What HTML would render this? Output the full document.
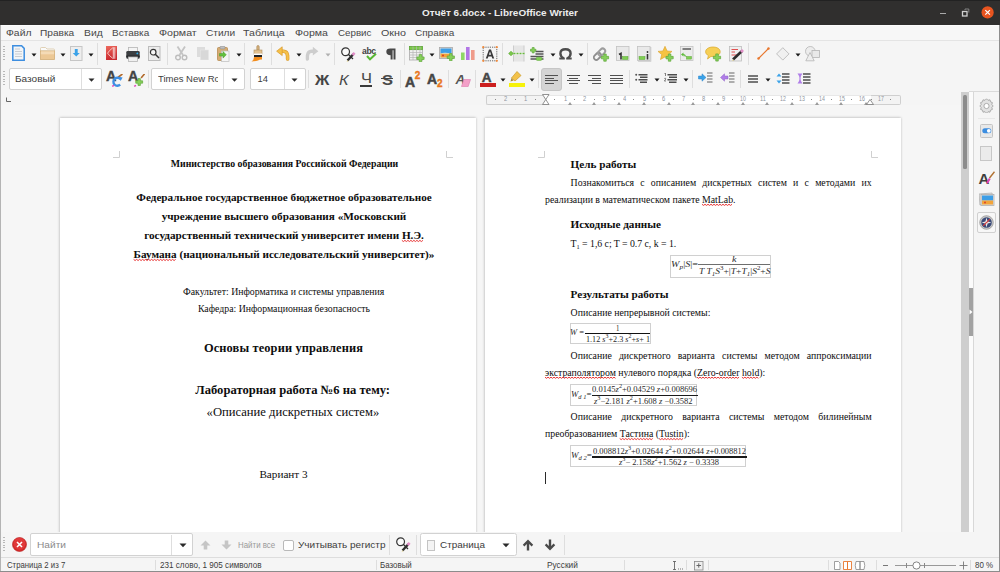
<!DOCTYPE html>
<html><head><meta charset="utf-8">
<style>
*{margin:0;padding:0;box-sizing:border-box}
html,body{width:1000px;height:572px;overflow:hidden;background:#f5f5f5;font-family:'Liberation Sans',sans-serif;position:relative}
.a{position:absolute}
.sp{}
</style></head><body>
<div class="a" style="left:0px;top:0px;width:1000px;height:25px;background:#302f2e"></div><div class="a" style="left:0px;top:0px;width:1000px;height:1px;background:#222"></div><div class="a" id="fit0" style="left:422.0px;top:8.40px;font:normal bold 9.8px/9.8px 'Liberation Sans',sans-serif;color:#ececec;white-space:nowrap;transform-origin:0 0;transform:scaleX(1.0170);">Отчёт 6.docx - LibreOffice Writer</div><div class="a" style="left:940px;top:13px;width:6px;height:1.4px;background:#a9a9a9"></div><svg class="a" style="left:960px;top:8px;" width="10" height="9" viewBox="0 0 10 9"><rect x="2.5" y="3.5" width="4.5" height="4.5" fill="none" stroke="#d0d0d0" stroke-width="1.3"/><path d="M5 2V1H8.8V4.6" fill="none" stroke="#8a8a8a" stroke-width="0.9"/></svg><svg class="a" style="left:980px;top:5px;" width="15" height="15" viewBox="0 0 15 15"><circle cx="7.6" cy="7.4" r="6.1" fill="#e8541f"/><path d="M5.3 5.1L9.9 9.7M9.9 5.1L5.3 9.7" stroke="#fff" stroke-width="1.2"/></svg><div class="a" style="left:0px;top:25px;width:1000px;height:16px;background:#f7f7f7"></div><div class="a" style="left:0px;top:25px;width:1000px;height:1px;background:#fcfcfc"></div><div class="a" style="left:0px;top:40px;width:1000px;height:1px;background:#e4e4e4"></div><div class="a" id="fit1" style="left:5.65px;top:28.73px;font:normal normal 9.3px/9.3px 'Liberation Sans',sans-serif;color:#484848;white-space:nowrap;transform-origin:0 0;transform:scaleX(1.1133);">Файл</div><div class="a" id="fit2" style="left:40.4px;top:28.73px;font:normal normal 9.3px/9.3px 'Liberation Sans',sans-serif;color:#484848;white-space:nowrap;transform-origin:0 0;transform:scaleX(1.0890);">Правка</div><div class="a" id="fit3" style="left:84.4px;top:28.73px;font:normal normal 9.3px/9.3px 'Liberation Sans',sans-serif;color:#484848;white-space:nowrap;transform-origin:0 0;transform:scaleX(1.1112);">Вид</div><div class="a" id="fit4" style="left:112.4px;top:28.73px;font:normal normal 9.3px/9.3px 'Liberation Sans',sans-serif;color:#484848;white-space:nowrap;transform-origin:0 0;transform:scaleX(1.0763);">Вставка</div><div class="a" id="fit5" style="left:158.9px;top:28.73px;font:normal normal 9.3px/9.3px 'Liberation Sans',sans-serif;color:#484848;white-space:nowrap;transform-origin:0 0;transform:scaleX(1.1413);">Формат</div><div class="a" id="fit6" style="left:206.4px;top:28.73px;font:normal normal 9.3px/9.3px 'Liberation Sans',sans-serif;color:#484848;white-space:nowrap;transform-origin:0 0;transform:scaleX(1.0897);">Стили</div><div class="a" id="fit7" style="left:243.4px;top:28.73px;font:normal normal 9.3px/9.3px 'Liberation Sans',sans-serif;color:#484848;white-space:nowrap;transform-origin:0 0;transform:scaleX(1.1439);">Таблица</div><div class="a" id="fit8" style="left:295.15px;top:28.73px;font:normal normal 9.3px/9.3px 'Liberation Sans',sans-serif;color:#484848;white-space:nowrap;transform-origin:0 0;transform:scaleX(1.1368);">Форма</div><div class="a" id="fit9" style="left:338.15px;top:28.73px;font:normal normal 9.3px/9.3px 'Liberation Sans',sans-serif;color:#484848;white-space:nowrap;transform-origin:0 0;transform:scaleX(1.0504);">Сервис</div><div class="a" id="fit10" style="left:381.15px;top:28.73px;font:normal normal 9.3px/9.3px 'Liberation Sans',sans-serif;color:#484848;white-space:nowrap;transform-origin:0 0;transform:scaleX(1.1546);">Окно</div><div class="a" id="fit11" style="left:415.4px;top:28.73px;font:normal normal 9.3px/9.3px 'Liberation Sans',sans-serif;color:#484848;white-space:nowrap;transform-origin:0 0;transform:scaleX(1.0744);">Справка</div><div class="a" style="left:0px;top:41px;width:1000px;height:64px;background:#f5f5f5"></div><div class="a" style="left:3px;top:46.0px;width:2px;height:1.2px;background:#b8b8b8"></div><div class="a" style="left:3px;top:48.5px;width:2px;height:1.2px;background:#b8b8b8"></div><div class="a" style="left:3px;top:51.0px;width:2px;height:1.2px;background:#b8b8b8"></div><div class="a" style="left:3px;top:53.5px;width:2px;height:1.2px;background:#b8b8b8"></div><div class="a" style="left:3px;top:56.0px;width:2px;height:1.2px;background:#b8b8b8"></div><div class="a" style="left:3px;top:58.5px;width:2px;height:1.2px;background:#b8b8b8"></div><div class="a" style="left:3px;top:71.0px;width:2px;height:1.2px;background:#b8b8b8"></div><div class="a" style="left:3px;top:73.5px;width:2px;height:1.2px;background:#b8b8b8"></div><div class="a" style="left:3px;top:76.0px;width:2px;height:1.2px;background:#b8b8b8"></div><div class="a" style="left:3px;top:78.5px;width:2px;height:1.2px;background:#b8b8b8"></div><div class="a" style="left:3px;top:81.0px;width:2px;height:1.2px;background:#b8b8b8"></div><div class="a" style="left:3px;top:83.5px;width:2px;height:1.2px;background:#b8b8b8"></div><svg class="a" style="left:12px;top:45px;" width="13" height="16" viewBox="0 0 13 16"><path d="M0.8 0.8H9.6L12.2 3.4V15.2H0.8Z" fill="#f3f5f7" stroke="#3d8ee0" stroke-width="1.5"/><path d="M3 4H8M3 6.5H10M3 9H10M3 11.5H10" stroke="#c9cdd2" stroke-width="1"/></svg><svg class="a" style="left:30.5px;top:53px;" width="6" height="4" viewBox="0 0 6 4"><path d="M0.5 0.5H5.5L3 3.5Z" fill="#1a1a1a"/></svg><svg class="a" style="left:40px;top:47px;" width="15" height="13" viewBox="0 0 15 13"><path d="M0.5 1.5Q0.5 0.5 1.5 0.5H5.5L7 2H13.5Q14.5 2 14.5 3V4H0.5Z" fill="#fafafa" stroke="#d9c6a4" stroke-width="0.8"/><rect x="0.5" y="4" width="14" height="8.5" fill="#ecc895" stroke="#d3ad75" stroke-width="0.8"/><rect x="0.9" y="4.3" width="13.2" height="3" fill="#f4dbb6"/></svg><svg class="a" style="left:59.5px;top:53px;" width="6" height="4" viewBox="0 0 6 4"><path d="M0.5 0.5H5.5L3 3.5Z" fill="#1a1a1a"/></svg><svg class="a" style="left:70px;top:46px;" width="13" height="15" viewBox="0 0 13 15"><rect x="0.5" y="0.5" width="11.5" height="14" fill="#eeeeee" stroke="#c6c6c6" stroke-width="1"/><path d="M4.8 3H7.7V7H9.8L6.25 10.6L2.7 7H4.8Z" fill="#3aa2e8"/></svg><svg class="a" style="left:88px;top:53px;" width="6" height="4" viewBox="0 0 6 4"><path d="M0.5 0.5H5.5L3 3.5Z" fill="#1a1a1a"/></svg><div class="a" style="left:97px;top:43px;width:1px;height:22px;background:#dedede"></div><svg class="a" style="left:106px;top:46px;" width="11" height="14" viewBox="0 0 11 14"><defs><linearGradient id="pdfg" x1="0" y1="0" x2="0.3" y2="1"><stop offset="0" stop-color="#ee6a5e"/><stop offset="1" stop-color="#c9282f"/></linearGradient></defs><rect x="0" y="0" width="11" height="14" fill="url(#pdfg)"/><path d="M7.3 1.2V12.8M8.8 1.2V12.8" stroke="#fff" stroke-width="0.8" opacity="0.95"/><path d="M6.8 1.8Q3 4.5 1.6 7.2Q3.5 10 6.8 12.4" fill="none" stroke="#fbe0dc" stroke-width="0.8"/></svg><svg class="a" style="left:126px;top:47px;" width="14" height="15" viewBox="0 0 14 15"><rect x="2.5" y="0.5" width="9" height="4.5" fill="#f4f4f4" stroke="#b5b5b5" stroke-width="0.8"/><rect x="0.3" y="4" width="13.4" height="7.8" rx="1.3" fill="#3b3e41"/><rect x="0.3" y="8.5" width="13.4" height="1.6" fill="#26282a"/><circle cx="11.3" cy="6.4" r="0.9" fill="#2ab0ef"/><rect x="2.5" y="10" width="9" height="4.5" fill="#f0f0f0" stroke="#b5b5b5" stroke-width="0.8"/></svg><svg class="a" style="left:148px;top:46px;" width="13" height="15" viewBox="0 0 13 15"><rect x="0.5" y="0.5" width="11.5" height="14" fill="#ececec" stroke="#bcbcbc" stroke-width="1"/><circle cx="5.2" cy="6.2" r="2.8" fill="#f7f7f7" stroke="#333" stroke-width="1.2"/><path d="M7.3 8.3L11 12" stroke="#333" stroke-width="1.5"/></svg><div class="a" style="left:167px;top:43px;width:1px;height:22px;background:#dedede"></div><svg class="a" style="left:175px;top:46px;" width="13" height="15" viewBox="0 0 13 15"><path d="M2.5 0.5L8 9M10 0.5L4.5 9" stroke="#c4c4c4" stroke-width="1.8"/><circle cx="3" cy="11.5" r="2.3" fill="none" stroke="#bdbdbd" stroke-width="1.4"/><circle cx="9.5" cy="11.5" r="2.3" fill="none" stroke="#bdbdbd" stroke-width="1.4"/></svg><svg class="a" style="left:197px;top:47px;" width="12" height="13" viewBox="0 0 12 13"><rect x="0" y="0" width="8" height="10" fill="#dcdcdc"/><rect x="3.5" y="3" width="8" height="10" fill="#d8d8d8" stroke="#e6e6e6" stroke-width="0.6"/></svg><svg class="a" style="left:217px;top:46px;" width="13" height="16" viewBox="0 0 13 16"><rect x="0.5" y="1.5" width="10" height="13" rx="1" fill="#d6ac72" stroke="#b88c52" stroke-width="0.8"/><rect x="3" y="0.3" width="5" height="2.6" rx="1" fill="#bfbfbf" stroke="#8e8e8e" stroke-width="0.6"/><rect x="4.5" y="5" width="7.5" height="10.5" fill="#f5f5f5" stroke="#bdbdbd" stroke-width="0.7"/><path d="M2.5 7.5H6V5.5L9.3 8.8L6 12.1V10.1H2.5Z" fill="#62c03c" stroke="#46962a" stroke-width="0.5"/></svg><svg class="a" style="left:236px;top:53px;" width="6" height="4" viewBox="0 0 6 4"><path d="M0.5 0.5H5.5L3 3.5Z" fill="#1a1a1a"/></svg><div class="a" style="left:244px;top:43px;width:1px;height:22px;background:#dedede"></div><svg class="a" style="left:251px;top:45px;" width="14" height="17" viewBox="0 0 14 17"><rect x="5.8" y="0.5" width="2.4" height="5" rx="1.2" fill="#d4b07c" stroke="#a98656" stroke-width="0.6"/><rect x="3" y="5" width="8" height="4" fill="#e2c08f" stroke="#b18f5f" stroke-width="0.6"/><rect x="3" y="8.5" width="8" height="1.5" fill="#fff"/><rect x="3" y="10" width="8" height="2" fill="#222"/><path d="M3 12H11V14.5Q9 14 7 15.5Q4 16.5 0.5 16.5Q3 15 3 12Z" fill="#f28c1c"/></svg><div class="a" style="left:271px;top:43px;width:1px;height:22px;background:#dedede"></div><svg class="a" style="left:276px;top:46px;" width="14" height="15" viewBox="0 0 14 15"><path d="M5.2 5.2H7.2Q12.3 5.2 11.6 13" fill="none" stroke="#d99a2c" stroke-width="3.6" stroke-linecap="round"/><path d="M5.2 5.2H7.2Q12.3 5.2 11.6 13" fill="none" stroke="#f5c048" stroke-width="2.4" stroke-linecap="round"/><path d="M0.6 5.2L6.2 0.8V9.6Z" fill="#f5c048" stroke="#d99a2c" stroke-width="0.7" stroke-linejoin="round"/></svg><svg class="a" style="left:296px;top:53px;" width="6" height="4" viewBox="0 0 6 4"><path d="M0.5 0.5H5.5L3 3.5Z" fill="#1a1a1a"/></svg><svg class="a" style="left:305px;top:46px;" width="14" height="15" viewBox="0 0 14 15"><path d="M8.8 5.2H6.8Q1.7 5.2 2.4 13" fill="none" stroke="#cdcdcd" stroke-width="3.4" stroke-linecap="round"/><path d="M13.4 5.2L7.8 0.8V9.6Z" fill="#cdcdcd"/></svg><svg class="a" style="left:325px;top:53px;" width="6" height="4" viewBox="0 0 6 4"><path d="M0.5 0.5H5.5L3 3.5Z" fill="#b0b0b0"/></svg><div class="a" style="left:334px;top:43px;width:1px;height:22px;background:#dedede"></div><svg class="a" style="left:341px;top:47px;" width="16" height="16" viewBox="0 0 16 16"><circle cx="4.6" cy="4.8" r="3.9" fill="#fafafa" stroke="#333" stroke-width="1.2"/><path d="M6.5 13.5L12.5 7" stroke="#2d2d2d" stroke-width="2.4"/><path d="M11.5 8L13.6 5.8" stroke="#e28fc8" stroke-width="2.6"/><path d="M6.8 13.2L5.5 15L7.6 14.1Z" fill="#e4d07c"/><path d="M7 7L12 12" stroke="#2d2d2d" stroke-width="1.2"/></svg><div class="a" style="left:362px;top:46.92px;font:normal bold 8.6px/8.6px 'Liberation Sans',sans-serif;color:#444;white-space:nowrap;letter-spacing:-0.4px">abc</div><svg class="a" style="left:366px;top:53px;" width="11" height="8" viewBox="0 0 11 8"><path d="M1 3L4 6.3L10 0.8" fill="none" stroke="#58b834" stroke-width="2"/></svg><svg class="a" style="left:386px;top:48px;" width="10" height="12" viewBox="0 0 10 12"><path d="M4.2 0.5H9.5V11.5H7.5V2.2H6.6V11.5H4.6V7.2Q0.3 7.2 0.3 3.8Q0.3 0.5 4.2 0.5Z" fill="#484848"/></svg><div class="a" style="left:404px;top:43px;width:1px;height:22px;background:#dedede"></div><svg class="a" style="left:409px;top:46px;" width="16" height="16" viewBox="0 0 16 16"><rect x="0.5" y="0.5" width="13" height="13.5" fill="#f0f0f0" stroke="#aaa" stroke-width="0.8"/><rect x="0.5" y="0.5" width="13" height="3.2" fill="#7ccb4a" stroke="#5aa534" stroke-width="0.7"/><path d="M4 0.5V14M7.5 0.5V14M11 0.5V14M0.5 6.5H13.5M0.5 9H13.5M0.5 11.5H13.5" stroke="#b4b4b4" stroke-width="0.7"/><path d="M10.25 8.6H12.75V10.95H15.1V13.45H12.75V15.799999999999999H10.25V13.45H7.9V10.95H10.25Z" fill="#86d05a" stroke="#5ea73a" stroke-width="0.7"/></svg><svg class="a" style="left:429px;top:53px;" width="6" height="4" viewBox="0 0 6 4"><path d="M0.5 0.5H5.5L3 3.5Z" fill="#1a1a1a"/></svg><svg class="a" style="left:439px;top:47px;" width="16" height="14" viewBox="0 0 16 14"><rect x="0.5" y="0.5" width="13" height="11" fill="#ddd" stroke="#a8a8a8" stroke-width="0.8"/><rect x="1.5" y="1.5" width="11" height="5" fill="#3d9ee6"/><rect x="1.5" y="6.5" width="11" height="4" fill="#f2a43a"/><path d="M1.5 6.5Q5 5 12.5 6.5" fill="#f7f0d8"/><circle cx="4" cy="8.5" r="1" fill="#d93a2a"/><path d="M10.55 6.6H13.05V8.95H15.4V11.45H13.05V13.799999999999999H10.55V11.45H8.200000000000001V8.95H10.55Z" fill="#86d05a" stroke="#5ea73a" stroke-width="0.7"/></svg><svg class="a" style="left:461px;top:47px;" width="14" height="13" viewBox="0 0 14 13"><rect x="0" y="5.5" width="3.6" height="7.5" fill="#8fd866"/><rect x="5" y="0" width="3.6" height="13" fill="#b277e6"/><rect x="10" y="3" width="3.6" height="10" fill="#ef9b8a"/></svg><svg class="a" style="left:482px;top:46px;" width="16" height="16" viewBox="0 0 16 16"><rect x="1.2" y="1.2" width="13.6" height="13.6" fill="none" stroke="#444" stroke-width="0.8" stroke-dasharray="1.2 1"/><circle cx="1.2" cy="1.2" r="1.1" fill="#f08a3c"/><circle cx="14.8" cy="1.2" r="1.1" fill="#f08a3c"/><circle cx="1.2" cy="14.8" r="1.1" fill="#f08a3c"/><circle cx="14.8" cy="14.8" r="1.1" fill="#f08a3c"/><path d="M3.8 12.5L7 3.5H9L12.2 12.5H10.3L9.6 10.4H6.4L5.7 12.5ZM6.9 8.8H9.1L8 5.6Z" fill="#3a3a3a"/></svg><div class="a" style="left:502px;top:43px;width:1px;height:22px;background:#dedede"></div><svg class="a" style="left:508px;top:45px;" width="17" height="17" viewBox="0 0 17 17"><rect x="5.5" y="0.5" width="10.5" height="16" fill="#e6e6e6"/><path d="M5.5 0.5V16.5M16 0.5V16.5" stroke="#c8c8c8" stroke-width="0.9"/><rect x="5.5" y="7.5" width="10.5" height="2" fill="#f7f7f7"/><path d="M0.6 8.5L3 6.3L5.4 8.5L3 10.7Z" fill="#7bc94b" stroke="#57a531" stroke-width="0.6"/><path d="M5.5 8.5H16.5" stroke="#67b83c" stroke-width="1.6" stroke-dasharray="2 1"/></svg><svg class="a" style="left:530px;top:47px;" width="14" height="14" viewBox="0 0 14 14"><path d="M5.5 4.5H13.5M5.5 7H13.5M0.5 9.5H13.5M0.5 12H13.5" stroke="#555" stroke-width="1.3"/><rect x="6" y="10.2" width="6" height="3.2" rx="1.5" fill="#7fcf52" stroke="#5aa534" stroke-width="0.5"/><path d="M2.2625 0.5H4.1375V2.2625H5.9V4.1375H4.1375V5.9H2.2625V4.1375H0.5V2.2625H2.2625Z" fill="#86d05a" stroke="#5ea73a" stroke-width="0.7"/></svg><svg class="a" style="left:550px;top:53px;" width="6" height="4" viewBox="0 0 6 4"><path d="M0.5 0.5H5.5L3 3.5Z" fill="#1a1a1a"/></svg><svg class="a" style="left:559px;top:48px;" width="13" height="12" viewBox="0 0 13 12"><path d="M4.6 10.2Q1.4 8.6 1.4 5.5Q1.4 1.2 6.5 1.2Q11.6 1.2 11.6 5.5Q11.6 8.6 8.4 10.2" fill="none" stroke="#4d4d4d" stroke-width="2.4"/><path d="M0.3 10.6H5.8M7.2 10.6H12.7" stroke="#4d4d4d" stroke-width="2"/></svg><svg class="a" style="left:578px;top:53px;" width="6" height="4" viewBox="0 0 6 4"><path d="M0.5 0.5H5.5L3 3.5Z" fill="#1a1a1a"/></svg><div class="a" style="left:587px;top:43px;width:1px;height:22px;background:#dedede"></div><svg class="a" style="left:593px;top:46px;" width="17" height="16" viewBox="0 0 17 16"><g transform="rotate(-45 7 8)"><rect x="-0.5" y="5.3" width="8" height="5" rx="2.5" fill="none" stroke="#8f8f8f" stroke-width="1.9"/><rect x="5.5" y="5.3" width="8" height="5" rx="2.5" fill="none" stroke="#9d9d9d" stroke-width="1.9"/></g><path d="M10.75 8.0H13.25V10.35H15.6V12.85H13.25V15.2H10.75V12.85H8.4V10.35H10.75Z" fill="#86d05a" stroke="#5ea73a" stroke-width="0.7"/></svg><svg class="a" style="left:616px;top:46px;" width="14" height="16" viewBox="0 0 14 16"><rect x="0.5" y="0.5" width="12.5" height="14" fill="#e9e9e9" stroke="#c2c2c2" stroke-width="0.8"/><path d="M3 8.5L5 7.3V13.5" fill="none" stroke="#333" stroke-width="1.6"/><rect x="6.5" y="10.5" width="5.5" height="3" fill="#7fcf52" stroke="#5aa534" stroke-width="0.5"/></svg><svg class="a" style="left:637px;top:46px;" width="15" height="16" viewBox="0 0 15 16"><rect x="1.5" y="1.5" width="12.5" height="14" fill="#dedede" stroke="#c9c9c9" stroke-width="0.6"/><rect x="0.5" y="0.5" width="12.5" height="14" fill="#e9e9e9" stroke="#c2c2c2" stroke-width="0.8"/><rect x="2" y="10.5" width="6" height="3" fill="#7fcf52" stroke="#5aa534" stroke-width="0.5"/><path d="M10.5 8V13.5" stroke="#333" stroke-width="1.6"/><circle cx="10.5" cy="6" r="0.9" fill="#333"/></svg><svg class="a" style="left:658px;top:46px;" width="16" height="16" viewBox="0 0 16 16"><path d="M7 0.3L9.1 5L14 5.4L10.3 8.6L11.5 13.5L7 10.9L2.5 13.5L3.7 8.6L0 5.4L4.9 5Z" fill="#f6c342" stroke="#d9a02a" stroke-width="0.6"/><path d="M10.35 8.0H12.85V10.35H15.2V12.85H12.85V15.2H10.35V12.85H8.0V10.35H10.35Z" fill="#86d05a" stroke="#5ea73a" stroke-width="0.7"/></svg><svg class="a" style="left:680px;top:46px;" width="14" height="16" viewBox="0 0 14 16"><rect x="0.5" y="0.5" width="12.5" height="14" fill="#ececec" stroke="#c2c2c2" stroke-width="0.8"/><path d="M2.5 3H11" stroke="#444" stroke-width="1.3"/><path d="M1 8.5L3.5 6.5V10.5Z" fill="#5dbb3a"/><path d="M3 8.5Q5 8.5 5.5 10.5" fill="none" stroke="#5dbb3a" stroke-width="1.2"/><rect x="6.5" y="10.5" width="5" height="2.6" fill="#7fcf52" stroke="#5aa534" stroke-width="0.5"/></svg><div class="a" style="left:700px;top:43px;width:1px;height:22px;background:#dedede"></div><svg class="a" style="left:705px;top:46px;" width="17" height="16" viewBox="0 0 17 16"><path d="M8 1C12.2 1 15.2 3 15.2 5.8C15.2 8.6 12.2 10.6 8 10.6C7.3 10.6 6.6 10.5 6 10.4L2.5 13L3.4 9.6C1.6 8.7 0.6 7.3 0.6 5.8C0.6 3 3.8 1 8 1Z" fill="#f6cf55" stroke="#d8a72d" stroke-width="0.7"/><path d="M10.75 7.9H13.25V10.25H15.6V12.75H13.25V15.1H10.75V12.75H8.4V10.25H10.75Z" fill="#86d05a" stroke="#5ea73a" stroke-width="0.7"/></svg><svg class="a" style="left:729px;top:46px;" width="15" height="16" viewBox="0 0 15 16"><rect x="0.5" y="0.5" width="12" height="14.5" fill="#efefef" stroke="#bdbdbd" stroke-width="0.8"/><path d="M2.5 3.5H9M2.5 6H6M2.5 9H8" stroke="#e05050" stroke-width="1.1"/><path d="M4 13.5L13 5" stroke="#2b2b2b" stroke-width="2.6"/><path d="M12 6L14 4" stroke="#e28fc8" stroke-width="2.6"/><path d="M4.3 13.2L3 15L5 14.2Z" fill="#e4d07c"/></svg><div class="a" style="left:748px;top:43px;width:1px;height:22px;background:#dedede"></div><svg class="a" style="left:757px;top:47px;" width="13" height="13" viewBox="0 0 13 13"><path d="M1.5 11.5L11.5 1.5" stroke="#e8772e" stroke-width="1.2"/><circle cx="1.5" cy="11.5" r="1.2" fill="#e8772e"/><circle cx="11.5" cy="1.5" r="1.2" fill="#e8772e"/></svg><svg class="a" style="left:776px;top:47px;" width="14" height="14" viewBox="0 0 14 14"><path d="M6.8 0.7L13 6.9L6.8 13.1L0.6 6.9Z" fill="#f0f0f0" stroke="#b9b9b9" stroke-width="0.9"/></svg><svg class="a" style="left:795px;top:53px;" width="6" height="4" viewBox="0 0 6 4"><path d="M0.5 0.5H5.5L3 3.5Z" fill="#1a1a1a"/></svg><svg class="a" style="left:805px;top:46px;" width="16" height="16" viewBox="0 0 16 16"><circle cx="5.3" cy="5.3" r="4.8" fill="#ededed" stroke="#b5b5b5" stroke-width="0.8"/><rect x="7" y="4.5" width="7.5" height="7" fill="#e9e9e9" stroke="#b5b5b5" stroke-width="0.8"/><path d="M5 6.5L9.2 14.8H0.8Z" fill="#eeeeee" stroke="#b5b5b5" stroke-width="0.8"/></svg><div class="a" style="left:9px;top:68px;width:93px;height:22px;background:#fff;border:1px solid #d2d2d2;border-radius:2px"></div><div class="a" style="left:81px;top:69px;width:1px;height:20px;background:#dedede"></div><div class="a" style="left:15.5px;top:75.13px;font:normal normal 9.3px/9.3px 'Liberation Sans',sans-serif;color:#3c3c3c;white-space:nowrap;"></div><svg class="a" style="left:88.0px;top:77.5px;" width="8" height="5" viewBox="0 0 8 5"><path d="M0.5 0.5H6.5L3.5 3.8Z" fill="#2a2a2a"/></svg><div class="a" id="fit12" style="left:15.3px;top:75.13px;font:normal normal 9.3px/9.3px 'Liberation Sans',sans-serif;color:#3c3c3c;white-space:nowrap;transform-origin:0 0;transform:scaleX(1.0801);">Базовый</div><div class="a" id="fit13" style="left:106.3px;top:69.44px;font:normal bold 14.6px/14.6px 'Liberation Sans',sans-serif;color:#434343;white-space:nowrap;transform-origin:0 0;transform:scaleX(0.9766);-webkit-text-stroke:0.4px #434343">A</div><svg class="a" style="left:111px;top:74px;" width="12" height="14" viewBox="0 0 12 14"><path d="M7.5 3L11 0.3" stroke="#b0682a" stroke-width="1.6" stroke-linecap="round"/><path d="M9.5 5.2A4 4 0 1 0 9.2 10.6" fill="none" stroke="#3d8fe4" stroke-width="2.3"/><path d="M8 2.8L11.6 3.6L9.6 7Z" fill="#3d8fe4"/><path d="M1.2 12.3L3 11.3" stroke="#e040b8" stroke-width="1.5"/></svg><div class="a" id="fit14" style="left:128px;top:69.44px;font:normal bold 14.6px/14.6px 'Liberation Sans',sans-serif;color:#434343;white-space:nowrap;transform-origin:0 0;transform:scaleX(0.9766);-webkit-text-stroke:0.4px #434343">A</div><svg class="a" style="left:133px;top:74px;" width="12" height="14" viewBox="0 0 12 14"><path d="M8.5 3.5L11.2 0.3" stroke="#b0682a" stroke-width="1.6" stroke-linecap="round"/><path d="M5.0125 4.58H7.3875V6.8125H9.620000000000001V9.1875H7.3875V11.42H5.0125V9.1875H2.7800000000000002V6.8125H5.0125Z" fill="#86d05a" stroke="#5ea73a" stroke-width="0.7"/><path d="M1.2 12.3L3 11.3" stroke="#e040b8" stroke-width="1.5"/></svg><div class="a" style="left:148px;top:70px;width:1px;height:18px;background:#dedede"></div><div class="a" style="left:151px;top:68px;width:94px;height:22px;background:#fff;border:1px solid #d2d2d2;border-radius:2px"></div><div class="a" style="left:152px;top:69px;width:65.5px;height:20px;overflow:hidden"><div class="a" id="fit15" style="left:6.0px;top:6.13px;font:normal normal 9.3px/9.3px 'Liberation Sans',sans-serif;color:#3c3c3c;white-space:nowrap;transform-origin:0 0;transform:scaleX(1.0194);">Times New Ro</div></div><div class="a" style="left:223px;top:69px;width:1px;height:20px;background:#dedede"></div><svg class="a" style="left:230.5px;top:77.5px;" width="8" height="5" viewBox="0 0 8 5"><path d="M0.5 0.5H6.5L3.5 3.8Z" fill="#2a2a2a"/></svg><div class="a" style="left:250px;top:68px;width:56px;height:22px;background:#fff;border:1px solid #d2d2d2;border-radius:2px"></div><div class="a" style="left:283.5px;top:69px;width:1px;height:20px;background:#dedede"></div><div class="a" style="left:257.5px;top:75.13px;font:normal normal 9.3px/9.3px 'Liberation Sans',sans-serif;color:#3c3c3c;white-space:nowrap;">14</div><svg class="a" style="left:291.25px;top:77.5px;" width="8" height="5" viewBox="0 0 8 5"><path d="M0.5 0.5H6.5L3.5 3.8Z" fill="#2a2a2a"/></svg><div class="a" style="left:308px;top:70px;width:1px;height:18px;background:#dedede"></div><div class="a" id="fit16" style="left:315px;top:72.60px;font:normal bold 14.3px/14.3px 'Liberation Sans',sans-serif;color:#454545;white-space:nowrap;transform-origin:0 0;transform:scaleX(1.1067);">Ж</div><div class="a" id="fit17" style="left:339px;top:72.60px;font:italic normal 14.3px/14.3px 'Liberation Sans',sans-serif;color:#4a4a4a;white-space:nowrap;transform-origin:0 0;transform:scaleX(1.1378);">К</div><div class="a" id="fit18" style="left:360.5px;top:70.48px;font:normal normal 15.5px/15.5px 'Liberation Sans',sans-serif;color:#4a4a4a;white-space:nowrap;transform-origin:0 0;transform:scaleX(1.0634);">Ч</div><div class="a" style="left:360px;top:85.3px;width:11.8px;height:1.7px;background:#3a3a3a"></div><div class="a" id="fit19" style="left:381.5px;top:72.60px;font:normal bold 14.3px/14.3px 'Liberation Sans',sans-serif;color:#4a4a4a;white-space:nowrap;transform-origin:0 0;transform:scaleX(1.1522);">S</div><div class="a" style="left:380.5px;top:77.8px;width:12.5px;height:1.6px;background:#454545"></div><div class="a" style="left:400px;top:70px;width:1px;height:18px;background:#dedede"></div><div class="a" style="left:405px;top:75.15px;font:normal bold 14px/14px 'Liberation Sans',sans-serif;color:#454545;white-space:nowrap;-webkit-text-stroke:0.5px #454545">A</div><div class="a" style="left:414.7px;top:70.83px;font:normal bold 10px/10px 'Liberation Sans',sans-serif;color:#e8771e;white-space:nowrap;-webkit-text-stroke:0.4px #e8771e">2</div><div class="a" style="left:427px;top:72.35px;font:normal bold 14px/14px 'Liberation Sans',sans-serif;color:#454545;white-space:nowrap;-webkit-text-stroke:0.5px #454545">A</div><div class="a" style="left:437px;top:78.53px;font:normal bold 10px/10px 'Liberation Sans',sans-serif;color:#e8771e;white-space:nowrap;-webkit-text-stroke:0.4px #e8771e">2</div><div class="a" style="left:448px;top:70px;width:1px;height:18px;background:#dedede"></div><div class="a" style="left:455.5px;top:72.57px;font:italic bold 13.5px/13.5px 'Liberation Sans',sans-serif;color:#555;white-space:nowrap;">A</div><svg class="a" style="left:461px;top:79px;" width="10" height="8" viewBox="0 0 10 8"><path d="M2.8 0.5H9.5L7.2 7.5H0.5Z" fill="#f3a0c8" stroke="#dc7bac" stroke-width="0.6"/></svg><div class="a" style="left:475px;top:70px;width:1px;height:18px;background:#dedede"></div><div class="a" style="left:481.8px;top:70.57px;font:normal bold 13.5px/13.5px 'Liberation Sans',sans-serif;color:#454545;white-space:nowrap;-webkit-text-stroke:0.5px #454545">A</div><div class="a" style="left:480px;top:83px;width:16px;height:4px;background:#cc1f1f"></div><svg class="a" style="left:500px;top:78px;" width="6" height="4" viewBox="0 0 6 4"><path d="M0.5 0.5H5.5L3 3.5Z" fill="#1a1a1a"/></svg><svg class="a" style="left:510px;top:71px;" width="12" height="12" viewBox="0 0 12 12"><path d="M7 0.5L11 4.5L5 10L1.5 7Z" fill="#f3c24a" stroke="#c99a2a" stroke-width="0.7"/><path d="M1.5 7L0.5 10.5L3.5 9.5Z" fill="#a98a3a"/></svg><div class="a" style="left:508.5px;top:83px;width:16px;height:4px;background:#f6f20a"></div><svg class="a" style="left:529px;top:78px;" width="6" height="4" viewBox="0 0 6 4"><path d="M0.5 0.5H5.5L3 3.5Z" fill="#1a1a1a"/></svg><div class="a" style="left:538px;top:70px;width:1px;height:18px;background:#dedede"></div><div class="a" style="left:540.5px;top:68px;width:21px;height:22.5px;background:#d4d4d4;border:1px solid #c6c6c6;border-radius:3px"></div><div class="a" style="left:544.8px;top:74.9px;width:13px;height:1.25px;background:#505050"></div><div class="a" style="left:544.8px;top:77.5px;width:9px;height:1.25px;background:#505050"></div><div class="a" style="left:544.8px;top:80.10000000000001px;width:13px;height:1.25px;background:#505050"></div><div class="a" style="left:544.8px;top:82.7px;width:9px;height:1.25px;background:#505050"></div><div class="a" style="left:566.5px;top:74.9px;width:13px;height:1.25px;background:#505050"></div><div class="a" style="left:568.5px;top:77.5px;width:9px;height:1.25px;background:#505050"></div><div class="a" style="left:566.5px;top:80.10000000000001px;width:13px;height:1.25px;background:#505050"></div><div class="a" style="left:568.5px;top:82.7px;width:9px;height:1.25px;background:#505050"></div><div class="a" style="left:588.3px;top:74.9px;width:13px;height:1.25px;background:#505050"></div><div class="a" style="left:592.3px;top:77.5px;width:9px;height:1.25px;background:#505050"></div><div class="a" style="left:588.3px;top:80.10000000000001px;width:13px;height:1.25px;background:#505050"></div><div class="a" style="left:592.3px;top:82.7px;width:9px;height:1.25px;background:#505050"></div><div class="a" style="left:610px;top:74.9px;width:13px;height:1.25px;background:#505050"></div><div class="a" style="left:610px;top:77.5px;width:13px;height:1.25px;background:#505050"></div><div class="a" style="left:610px;top:80.10000000000001px;width:13px;height:1.25px;background:#505050"></div><div class="a" style="left:610px;top:82.7px;width:13px;height:1.25px;background:#505050"></div><div class="a" style="left:629px;top:70px;width:1px;height:18px;background:#dedede"></div><svg class="a" style="left:635px;top:73px;" width="13" height="11" viewBox="0 0 13 11"><circle cx="1.2" cy="1.8" r="1" fill="#555"/><circle cx="1.2" cy="6.8" r="1" fill="#555"/><path d="M3.5 1.8H12.5M5 4.3H12.5M3.5 6.8H12.5M5 9.3H12" stroke="#4d4d4d" stroke-width="1.4"/></svg><svg class="a" style="left:654px;top:78px;" width="6" height="4" viewBox="0 0 6 4"><path d="M0.5 0.5H5.5L3 3.5Z" fill="#1a1a1a"/></svg><svg class="a" style="left:663.5px;top:73px;" width="14" height="11" viewBox="0 0 14 11"><path d="M0.5 0.5L1.5 0V3" fill="none" stroke="#666" stroke-width="0.8"/><path d="M0.3 5.5Q1.8 4.5 1.8 6Q1.2 7 0.3 8H2" fill="none" stroke="#666" stroke-width="0.8"/><path d="M3.5 1.8H13M5 4.3H13M3.5 6.8H13M5 9.3H12.5" stroke="#4d4d4d" stroke-width="1.4"/></svg><svg class="a" style="left:683px;top:78px;" width="6" height="4" viewBox="0 0 6 4"><path d="M0.5 0.5H5.5L3 3.5Z" fill="#1a1a1a"/></svg><div class="a" style="left:692px;top:70px;width:1px;height:18px;background:#dedede"></div><svg class="a" style="left:698px;top:72px;" width="15" height="13" viewBox="0 0 15 13"><path d="M0.5 4H4V1.8L8 5.5L4 9.2V7H0.5Z" fill="#3aa2e8" stroke="#2a82c8" stroke-width="0.5"/><path d="M9 1H14.5M9 4H14.5M9 7H14.5M9 10H14.5" stroke="#666" stroke-width="1.2"/></svg><svg class="a" style="left:720px;top:72px;" width="15" height="13" viewBox="0 0 15 13"><path d="M8 4H4.5V1.8L0.5 5.5L4.5 9.2V7H8Z" fill="#b07ee8" stroke="#9060c8" stroke-width="0.5"/><path d="M9 1H14.5M9 4H14.5M9 7H14.5M9 10H14.5" stroke="#666" stroke-width="1.2"/></svg><div class="a" style="left:740px;top:70px;width:1px;height:18px;background:#dedede"></div><svg class="a" style="left:747.5px;top:75px;" width="11" height="8" viewBox="0 0 11 8"><path d="M0 1H10M0 4H10M0 7H10" stroke="#4d4d4d" stroke-width="1.6"/></svg><svg class="a" style="left:765px;top:78px;" width="6" height="4" viewBox="0 0 6 4"><path d="M0.5 0.5H5.5L3 3.5Z" fill="#1a1a1a"/></svg><svg class="a" style="left:775.5px;top:73px;" width="14" height="11" viewBox="0 0 14 11"><path d="M3 0.5L5.5 3.5H0.5Z" fill="#3aa2e8"/><path d="M3 10.5L5.5 7.5H0.5Z" fill="#3aa2e8"/><path d="M6 1H13.5M6 4H13.5M6 7H13.5M6 10H13.5" stroke="#4d4d4d" stroke-width="1.4"/></svg><svg class="a" style="left:797px;top:73px;" width="14" height="11" viewBox="0 0 14 11"><path d="M0.5 0.5H5.5L3 4.5ZM0.5 10.5H5.5L3 6.5Z" fill="#b07ee8"/><rect x="2.4" y="3" width="1.2" height="5" fill="#b07ee8"/><path d="M6 1H13.5M6 4H13.5M6 7H13.5M6 10H13.5" stroke="#4d4d4d" stroke-width="1.4"/></svg><svg class="a" style="left:5px;top:97px;" width="7" height="6" viewBox="0 0 7 6"><path d="M1.5 0.5V4.5H6" fill="none" stroke="#666" stroke-width="1"/></svg><div class="a" style="left:485.5px;top:94.5px;width:60px;height:10.5px;background:#f3f3f3;border:1px solid #cfcfcf;border-right:none;border-radius:2px 0 0 2px"></div><div class="a" style="left:545px;top:94.5px;width:326px;height:10.5px;background:#ffffff;border-top:1px solid #e8e8e8;border-bottom:1px solid #e8e8e8"></div><div class="a" style="left:871px;top:94.5px;width:29.5px;height:10.5px;background:#f3f3f3;border:1px solid #cfcfcf;border-left:none;border-radius:0 2px 2px 0"></div><div class="a" style="left:495.1px;top:98.6px;width:1px;height:1.3px;background:#8a8a8a"></div><div class="a" id="fit20" style="left:504.28px;top:96.01px;font:normal normal 6.6px/6.6px 'Liberation Sans',sans-serif;color:#8e959e;white-space:nowrap;transform-origin:0 0;transform:scaleX(0.8715);">2</div><div class="a" style="left:514.86px;top:98.6px;width:1px;height:1.3px;background:#8a8a8a"></div><div class="a" id="fit21" style="left:524.04px;top:96.01px;font:normal normal 6.6px/6.6px 'Liberation Sans',sans-serif;color:#8e959e;white-space:nowrap;transform-origin:0 0;transform:scaleX(0.8715);">1</div><div class="a" style="left:534.62px;top:98.6px;width:1px;height:1.3px;background:#8a8a8a"></div><div class="a" style="left:554.38px;top:98.6px;width:1px;height:1.3px;background:#8a8a8a"></div><div class="a" id="fit22" style="left:563.56px;top:96.01px;font:normal normal 6.6px/6.6px 'Liberation Sans',sans-serif;color:#8e959e;white-space:nowrap;transform-origin:0 0;transform:scaleX(0.8715);">1</div><div class="a" style="left:574.14px;top:98.6px;width:1px;height:1.3px;background:#8a8a8a"></div><div class="a" id="fit23" style="left:583.3199999999999px;top:96.01px;font:normal normal 6.6px/6.6px 'Liberation Sans',sans-serif;color:#8e959e;white-space:nowrap;transform-origin:0 0;transform:scaleX(0.8715);">2</div><div class="a" style="left:593.9px;top:98.6px;width:1px;height:1.3px;background:#8a8a8a"></div><div class="a" id="fit24" style="left:603.0799999999999px;top:96.01px;font:normal normal 6.6px/6.6px 'Liberation Sans',sans-serif;color:#8e959e;white-space:nowrap;transform-origin:0 0;transform:scaleX(0.8715);">3</div><div class="a" style="left:613.66px;top:98.6px;width:1px;height:1.3px;background:#8a8a8a"></div><div class="a" id="fit25" style="left:622.8399999999999px;top:96.01px;font:normal normal 6.6px/6.6px 'Liberation Sans',sans-serif;color:#8e959e;white-space:nowrap;transform-origin:0 0;transform:scaleX(0.8715);">4</div><div class="a" style="left:633.42px;top:98.6px;width:1px;height:1.3px;background:#8a8a8a"></div><div class="a" id="fit26" style="left:642.5999999999999px;top:96.01px;font:normal normal 6.6px/6.6px 'Liberation Sans',sans-serif;color:#8e959e;white-space:nowrap;transform-origin:0 0;transform:scaleX(0.8715);">5</div><div class="a" style="left:653.18px;top:98.6px;width:1px;height:1.3px;background:#8a8a8a"></div><div class="a" id="fit27" style="left:662.3599999999999px;top:96.01px;font:normal normal 6.6px/6.6px 'Liberation Sans',sans-serif;color:#8e959e;white-space:nowrap;transform-origin:0 0;transform:scaleX(0.8715);">6</div><div class="a" style="left:672.9399999999999px;top:98.6px;width:1px;height:1.3px;background:#8a8a8a"></div><div class="a" id="fit28" style="left:682.12px;top:96.01px;font:normal normal 6.6px/6.6px 'Liberation Sans',sans-serif;color:#8e959e;white-space:nowrap;transform-origin:0 0;transform:scaleX(0.8715);">7</div><div class="a" style="left:692.7px;top:98.6px;width:1px;height:1.3px;background:#8a8a8a"></div><div class="a" id="fit29" style="left:701.88px;top:96.01px;font:normal normal 6.6px/6.6px 'Liberation Sans',sans-serif;color:#8e959e;white-space:nowrap;transform-origin:0 0;transform:scaleX(0.8715);">8</div><div class="a" style="left:712.46px;top:98.6px;width:1px;height:1.3px;background:#8a8a8a"></div><div class="a" id="fit30" style="left:721.64px;top:96.01px;font:normal normal 6.6px/6.6px 'Liberation Sans',sans-serif;color:#8e959e;white-space:nowrap;transform-origin:0 0;transform:scaleX(0.8715);">9</div><div class="a" style="left:732.22px;top:98.6px;width:1px;height:1.3px;background:#8a8a8a"></div><div class="a" id="fit31" style="left:740.1px;top:96.01px;font:normal normal 6.6px/6.6px 'Liberation Sans',sans-serif;color:#8e959e;white-space:nowrap;transform-origin:0 0;transform:scaleX(0.7898);">10</div><div class="a" style="left:751.98px;top:98.6px;width:1px;height:1.3px;background:#8a8a8a"></div><div class="a" id="fit32" style="left:759.86px;top:96.01px;font:normal normal 6.6px/6.6px 'Liberation Sans',sans-serif;color:#8e959e;white-space:nowrap;transform-origin:0 0;transform:scaleX(0.8456);">11</div><div class="a" style="left:771.74px;top:98.6px;width:1px;height:1.3px;background:#8a8a8a"></div><div class="a" id="fit33" style="left:779.62px;top:96.01px;font:normal normal 6.6px/6.6px 'Liberation Sans',sans-serif;color:#8e959e;white-space:nowrap;transform-origin:0 0;transform:scaleX(0.7898);">12</div><div class="a" style="left:791.5px;top:98.6px;width:1px;height:1.3px;background:#8a8a8a"></div><div class="a" id="fit34" style="left:799.38px;top:96.01px;font:normal normal 6.6px/6.6px 'Liberation Sans',sans-serif;color:#8e959e;white-space:nowrap;transform-origin:0 0;transform:scaleX(0.7898);">13</div><div class="a" style="left:811.26px;top:98.6px;width:1px;height:1.3px;background:#8a8a8a"></div><div class="a" id="fit35" style="left:819.1400000000001px;top:96.01px;font:normal normal 6.6px/6.6px 'Liberation Sans',sans-serif;color:#8e959e;white-space:nowrap;transform-origin:0 0;transform:scaleX(0.7898);">14</div><div class="a" style="left:831.0200000000001px;top:98.6px;width:1px;height:1.3px;background:#8a8a8a"></div><div class="a" id="fit36" style="left:838.9000000000001px;top:96.01px;font:normal normal 6.6px/6.6px 'Liberation Sans',sans-serif;color:#8e959e;white-space:nowrap;transform-origin:0 0;transform:scaleX(0.7898);">15</div><div class="a" style="left:850.7800000000001px;top:98.6px;width:1px;height:1.3px;background:#8a8a8a"></div><div class="a" id="fit37" style="left:858.6600000000001px;top:96.01px;font:normal normal 6.6px/6.6px 'Liberation Sans',sans-serif;color:#8e959e;white-space:nowrap;transform-origin:0 0;transform:scaleX(0.7898);">16</div><div class="a" style="left:870.5400000000001px;top:98.6px;width:1px;height:1.3px;background:#8a8a8a"></div><div class="a" id="fit38" style="left:878.4200000000001px;top:96.01px;font:normal normal 6.6px/6.6px 'Liberation Sans',sans-serif;color:#8e959e;white-space:nowrap;transform-origin:0 0;transform:scaleX(0.7898);">17</div><div class="a" style="left:890.3000000000001px;top:98.6px;width:1px;height:1.3px;background:#8a8a8a"></div><svg class="a" style="left:567.7px;top:101.8px;" width="4" height="3.2" viewBox="0 0 4 3.2"><path d="M2 0L4 3H0Z" fill="#9a9a9a"/></svg><svg class="a" style="left:592.4px;top:101.8px;" width="4" height="3.2" viewBox="0 0 4 3.2"><path d="M2 0L4 3H0Z" fill="#9a9a9a"/></svg><svg class="a" style="left:617.1px;top:101.8px;" width="4" height="3.2" viewBox="0 0 4 3.2"><path d="M2 0L4 3H0Z" fill="#9a9a9a"/></svg><svg class="a" style="left:641.8px;top:101.8px;" width="4" height="3.2" viewBox="0 0 4 3.2"><path d="M2 0L4 3H0Z" fill="#9a9a9a"/></svg><svg class="a" style="left:666.5px;top:101.8px;" width="4" height="3.2" viewBox="0 0 4 3.2"><path d="M2 0L4 3H0Z" fill="#9a9a9a"/></svg><svg class="a" style="left:691.2px;top:101.8px;" width="4" height="3.2" viewBox="0 0 4 3.2"><path d="M2 0L4 3H0Z" fill="#9a9a9a"/></svg><svg class="a" style="left:715.9px;top:101.8px;" width="4" height="3.2" viewBox="0 0 4 3.2"><path d="M2 0L4 3H0Z" fill="#9a9a9a"/></svg><svg class="a" style="left:740.6px;top:101.8px;" width="4" height="3.2" viewBox="0 0 4 3.2"><path d="M2 0L4 3H0Z" fill="#9a9a9a"/></svg><svg class="a" style="left:765.3px;top:101.8px;" width="4" height="3.2" viewBox="0 0 4 3.2"><path d="M2 0L4 3H0Z" fill="#9a9a9a"/></svg><svg class="a" style="left:790.0px;top:101.8px;" width="4" height="3.2" viewBox="0 0 4 3.2"><path d="M2 0L4 3H0Z" fill="#9a9a9a"/></svg><svg class="a" style="left:814.7px;top:101.8px;" width="4" height="3.2" viewBox="0 0 4 3.2"><path d="M2 0L4 3H0Z" fill="#9a9a9a"/></svg><svg class="a" style="left:839.4000000000001px;top:101.8px;" width="4" height="3.2" viewBox="0 0 4 3.2"><path d="M2 0L4 3H0Z" fill="#9a9a9a"/></svg><svg class="a" style="left:864.1px;top:101.8px;" width="4" height="3.2" viewBox="0 0 4 3.2"><path d="M2 0L4 3H0Z" fill="#9a9a9a"/></svg><svg class="a" style="left:541.5px;top:94px;" width="8" height="12" viewBox="0 0 8 12"><path d="M0.5 0.5H7L3.75 5.5ZM3.75 5.5L7 10.5H0.5Z" fill="#fff" stroke="#777" stroke-width="0.8"/></svg><svg class="a" style="left:865px;top:99px;" width="10" height="7" viewBox="0 0 10 7"><path d="M5 0.5L8.5 5.5H1.5Z" fill="#fff" stroke="#777" stroke-width="0.8"/></svg><div class="a" style="left:1px;top:105px;width:960px;height:427px;background:#f6f6f6"></div><div class="a" style="left:0px;top:25px;width:1px;height:547px;background:#b4b4b4"></div><div class="a" style="left:59.5px;top:117.5px;width:416.6px;height:430px;background:#fff;box-shadow:0 0 2.5px 0.3px rgba(0,0,0,0.3)"></div><div class="a" style="left:484.8px;top:117.5px;width:416.3px;height:430px;background:#fff;box-shadow:0 0 2.5px 0.3px rgba(0,0,0,0.3)"></div><svg class="a" style="left:113px;top:151px;" width="8" height="8" viewBox="0 0 8 8"><path d="M0 6.5H6.5V0" fill="none" stroke="#d0d0d0" stroke-width="1"/></svg><svg class="a" style="left:444.8px;top:151px;" width="8" height="8" viewBox="0 0 8 8"><path d="M1.5 0V6.5H8" fill="none" stroke="#d0d0d0" stroke-width="1"/></svg><svg class="a" style="left:538px;top:151px;" width="8" height="8" viewBox="0 0 8 8"><path d="M0 6.5H6.5V0" fill="none" stroke="#d0d0d0" stroke-width="1"/></svg><svg class="a" style="left:869.5px;top:151px;" width="8" height="8" viewBox="0 0 8 8"><path d="M1.5 0V6.5H8" fill="none" stroke="#d0d0d0" stroke-width="1"/></svg><div class="a" style="left:84.5px;top:158.79px;width:400px;text-align:center;font:normal bold 9.8px/9.8px 'Liberation Serif',serif;color:#0d0d0d;white-space:nowrap;">Министерство образования Российской Федерации</div><div class="a" style="left:84px;top:191.92px;width:400px;text-align:center;font:normal bold 11.2px/11.2px 'Liberation Serif',serif;color:#0d0d0d;white-space:nowrap;">Федеральное государственное бюджетное образовательное</div><div class="a" style="left:84px;top:210.82px;width:400px;text-align:center;font:normal bold 11.2px/11.2px 'Liberation Serif',serif;color:#0d0d0d;white-space:nowrap;">учреждение высшего образования «Московский</div><div class="a" style="left:84px;top:229.72px;width:400px;text-align:center;font:normal bold 11.2px/11.2px 'Liberation Serif',serif;color:#0d0d0d;white-space:nowrap;">государственный технический университет имени <span class="sp">Н.Э.</span></div><div class="a" style="left:84px;top:248.62px;width:400px;text-align:center;font:normal bold 11.2px/11.2px 'Liberation Serif',serif;color:#0d0d0d;white-space:nowrap;"><span class="sp">Баумана</span> (национальный исследовательский университет)»</div><div class="a" style="left:83.60000000000002px;top:287.09px;width:400px;text-align:center;font:normal normal 9.8px/9.8px 'Liberation Serif',serif;color:#0d0d0d;white-space:nowrap;">Факультет: Информатика и системы управления</div><div class="a" style="left:84px;top:304.09px;width:400px;text-align:center;font:normal normal 9.8px/9.8px 'Liberation Serif',serif;color:#0d0d0d;white-space:nowrap;">Кафедра: Информационная безопасность</div><div class="a" style="left:83.5px;top:341.92px;width:400px;text-align:center;font:normal bold 12.4px/12.4px 'Liberation Serif',serif;color:#0d0d0d;white-space:nowrap;letter-spacing:0.13px">Основы теории управления</div><div class="a" style="left:92.69999999999999px;top:384.35px;width:400px;text-align:center;font:normal bold 12.6px/12.6px 'Liberation Serif',serif;color:#0d0d0d;white-space:nowrap;">Лабораторная работа №6 на тему:</div><div class="a" style="left:92.89999999999998px;top:405.75px;width:400px;text-align:center;font:normal normal 12.6px/12.6px 'Liberation Serif',serif;color:#0d0d0d;white-space:nowrap;">«Описание дискретных систем»</div><div class="a" style="left:83.5px;top:468.92px;width:400px;text-align:center;font:normal normal 11.2px/11.2px 'Liberation Serif',serif;color:#0d0d0d;white-space:nowrap;">Вариант 3</div><div class="a" style="left:570.6px;top:159.32px;font:normal bold 11.2px/11.2px 'Liberation Serif',serif;color:#0d0d0d;white-space:nowrap;">Цель работы</div><div class="a" style="left:570.6px;top:178.19px;width:301.0px;font:normal normal 9.8px/9.8px 'Liberation Serif',serif;color:#0d0d0d;white-space:nowrap;text-align:justify;text-align-last:justify">Познакомиться с описанием дискретных систем и с методами их</div><div class="a" style="left:545px;top:195.19px;font:normal normal 9.8px/9.8px 'Liberation Serif',serif;color:#0d0d0d;white-space:nowrap;">реализации в математическом пакете <span class="sp">MatLab</span>.</div><div class="a" style="left:570.6px;top:219.32px;font:normal bold 11.2px/11.2px 'Liberation Serif',serif;color:#0d0d0d;white-space:nowrap;">Исходные данные</div><div class="a" style="left:570.6px;top:239.39px;font:normal normal 9.8px/9.8px 'Liberation Serif',serif;color:#0d0d0d;white-space:nowrap;letter-spacing:-0.03px">T<span style="font-size:6.3px;position:relative;top:1.2px">1</span> = 1,6 c; T = 0.7 c, k = 1.</div><div class="a" style="left:570.6px;top:289.02px;font:normal bold 11.2px/11.2px 'Liberation Serif',serif;color:#0d0d0d;white-space:nowrap;">Результаты работы</div><div class="a" style="left:570.6px;top:307.79px;font:normal normal 9.8px/9.8px 'Liberation Serif',serif;color:#0d0d0d;white-space:nowrap;">Описание непрерывной системы:</div><div class="a" style="left:570.6px;top:351.09px;width:301.0px;font:normal normal 9.8px/9.8px 'Liberation Serif',serif;color:#0d0d0d;white-space:nowrap;text-align:justify;text-align-last:justify">Описание дискретного варианта системы методом аппроксимации</div><div class="a" style="left:545px;top:368.09px;font:normal normal 9.8px/9.8px 'Liberation Serif',serif;color:#0d0d0d;white-space:nowrap;"><span class="sp">экстраполятором</span> нулевого порядка (<span class="sp">Zero-order</span> <span class="sp">hold</span>):</div><div class="a" style="left:570.6px;top:412.39px;width:301.0px;font:normal normal 9.8px/9.8px 'Liberation Serif',serif;color:#0d0d0d;white-space:nowrap;text-align:justify;text-align-last:justify">Описание дискретного варианта системы методом билинейным</div><div class="a" style="left:545px;top:429.39px;font:normal normal 9.8px/9.8px 'Liberation Serif',serif;color:#0d0d0d;white-space:nowrap;">преобразованием <span class="sp">Тастина</span> (<span class="sp">Tustin</span>):</div><div class="a" style="left:545px;top:472.3px;width:1px;height:11.6px;background:#2a2a2a"></div><svg class="a" style="left:0;top:0" width="1000" height="572"><polyline points="401.9,240.4 403.4,241.5 404.9,240.4 406.4,241.5 407.9,240.4 409.4,241.5 410.9,240.4 412.4,241.5 413.9,240.4 415.4,241.5 416.9,240.4 418.4,241.5 419.9,240.4 421.4,241.5 422.9,240.4" fill="none" stroke="#e62a2a" stroke-width="0.95"/><polyline points="133.6,259.4 135.1,260.5 136.6,259.4 138.1,260.5 139.6,259.4 141.1,260.5 142.6,259.4 144.1,260.5 145.6,259.4 147.1,260.5 148.6,259.4 150.1,260.5 151.6,259.4 153.1,260.5 154.6,259.4 156.1,260.5 157.6,259.4 159.1,260.5 160.6,259.4 162.1,260.5 163.6,259.4 165.1,260.5 166.6,259.4 168.1,260.5 169.6,259.4 171.1,260.5 172.6,259.4 174.1,260.5 175.6,259.4" fill="none" stroke="#e62a2a" stroke-width="0.95"/><polyline points="702.0,204.3 703.5,205.4 705.0,204.3 706.5,205.4 708.0,204.3 709.5,205.4 711.0,204.3 712.5,205.4 714.0,204.3 715.5,205.4 717.0,204.3 718.5,205.4 720.0,204.3 721.5,205.4 723.0,204.3 724.5,205.4 726.0,204.3 727.5,205.4 729.0,204.3 730.5,205.4 732.0,204.3" fill="none" stroke="#e62a2a" stroke-width="0.95"/><polyline points="545.0,377.2 546.5,378.3 548.0,377.2 549.5,378.3 551.0,377.2 552.5,378.3 554.0,377.2 555.5,378.3 557.0,377.2 558.5,378.3 560.0,377.2 561.5,378.3 563.0,377.2 564.5,378.3 566.0,377.2 567.5,378.3 569.0,377.2 570.5,378.3 572.0,377.2 573.5,378.3 575.0,377.2 576.5,378.3 578.0,377.2 579.5,378.3 581.0,377.2 582.5,378.3 584.0,377.2 585.5,378.3 587.0,377.2 588.5,378.3 590.0,377.2 591.5,378.3 593.0,377.2 594.5,378.3 596.0,377.2 597.5,378.3 599.0,377.2 600.5,378.3 602.0,377.2 603.5,378.3 605.0,377.2 606.5,378.3 608.0,377.2 609.5,378.3 611.0,377.2 612.5,378.3 614.0,377.2 615.5,378.3" fill="none" stroke="#e62a2a" stroke-width="0.95"/><polyline points="697.0,377.2 698.5,378.3 700.0,377.2 701.5,378.3 703.0,377.2 704.5,378.3 706.0,377.2 707.5,378.3 709.0,377.2 710.5,378.3 712.0,377.2 713.5,378.3 715.0,377.2 716.5,378.3 718.0,377.2 719.5,378.3 721.0,377.2 722.5,378.3 724.0,377.2 725.5,378.3 727.0,377.2 728.5,378.3 730.0,377.2 731.5,378.3 733.0,377.2 734.5,378.3 736.0,377.2 737.5,378.3 739.0,377.2" fill="none" stroke="#e62a2a" stroke-width="0.95"/><polyline points="741.9,377.2 743.4,378.3 744.9,377.2 746.4,378.3 747.9,377.2 749.4,378.3 750.9,377.2 752.4,378.3 753.9,377.2 755.4,378.3 756.9,377.2 758.4,378.3" fill="none" stroke="#e62a2a" stroke-width="0.95"/><polyline points="619.7,438.5 621.2,439.6 622.7,438.5 624.2,439.6 625.7,438.5 627.2,439.6 628.7,438.5 630.2,439.6 631.7,438.5 633.2,439.6 634.7,438.5 636.2,439.6 637.7,438.5 639.2,439.6 640.7,438.5 642.2,439.6 643.7,438.5 645.2,439.6 646.7,438.5 648.2,439.6 649.7,438.5 651.2,439.6 652.7,438.5" fill="none" stroke="#e62a2a" stroke-width="0.95"/><polyline points="659.0,438.5 660.5,439.6 662.0,438.5 663.5,439.6 665.0,438.5 666.5,439.6 668.0,438.5 669.5,439.6 671.0,438.5 672.5,439.6 674.0,438.5 675.5,439.6 677.0,438.5 678.5,439.6 680.0,438.5 681.5,439.6 683.0,438.5" fill="none" stroke="#e62a2a" stroke-width="0.95"/></svg><div class="a" style="left:670px;top:255px;width:101px;height:22.5px;border:1px solid #d0d0d0"></div><div class="a" id="fit39" style="left:670.5px;top:261.00px;font:italic normal 7.4px/7.4px 'Liberation Serif',serif;color:#2a2a2a;white-space:nowrap;transform-origin:0 0;transform:scaleX(1.3693);">W<span style="font-size:5.4px;position:relative;top:1.8px">p</span><span style="font-style:normal">|</span>S<span style="font-style:normal">|=</span></div><div class="a" style="left:698px;top:263.8px;width:72px;height:1.5px;background:#6e6e6e"></div><div class="a" id="fit40" style="left:732px;top:255.80px;font:italic normal 7.4px/7.4px 'Liberation Serif',serif;color:#2a2a2a;white-space:nowrap;transform-origin:0 0;transform:scaleX(1.3714);">k</div><div class="a" id="fit41" style="left:698.5px;top:268.00px;font:italic normal 7.4px/7.4px 'Liberation Serif',serif;color:#2a2a2a;white-space:nowrap;transform-origin:0 0;transform:scaleX(1.2861);">T T<span style="font-size:5.4px;position:relative;top:1.8px">1</span>S<span style="font-size:5.4px;position:relative;top:-4.0px;font-style:normal">3</span><span style="font-style:normal">+|</span>T<span style="font-style:normal">+</span>T<span style="font-size:5.4px;position:relative;top:1.8px">1</span><span style="font-style:normal">|</span>S<span style="font-size:5.4px;position:relative;top:-4.0px;font-style:normal">2</span><span style="font-style:normal">+</span>S</div><div class="a" style="left:570px;top:323px;width:80.60000000000002px;height:21.30000000000001px;border:1px solid #d0d0d0"></div><div class="a" id="fit42" style="left:570.4px;top:328.80px;font:italic normal 7.4px/7.4px 'Liberation Serif',serif;color:#2a2a2a;white-space:nowrap;transform-origin:0 0;transform:scaleX(1.1472);">W<span style="font-style:normal"> =</span></div><div class="a" style="left:585px;top:332.6px;width:65px;height:1.5px;background:#111"></div><div class="a" id="fit43" style="left:616.4px;top:324.60px;font:italic normal 7.4px/7.4px 'Liberation Serif',serif;color:#2a2a2a;white-space:nowrap;transform-origin:0 0;transform:scaleX(0.9181);"><span style="font-style:normal">1</span></div><div class="a" id="fit44" style="left:586px;top:336.30px;font:italic normal 7.4px/7.4px 'Liberation Serif',serif;color:#2a2a2a;white-space:nowrap;transform-origin:0 0;transform:scaleX(1.1032);"><span style="font-style:normal">1.12 </span>s<span style="font-size:5.4px;position:relative;top:-4.0px;font-style:normal">3</span><span style="font-style:normal">+2.3 </span>s<span style="font-size:5.4px;position:relative;top:-4.0px;font-style:normal">2</span><span style="font-style:normal">+</span>s<span style="font-style:normal">+ 1</span></div><div class="a" style="left:570.3px;top:384.2px;width:127.10000000000002px;height:21.80000000000001px;border:1px solid #d0d0d0"></div><div class="a" id="fit45" style="left:570.6px;top:391.30px;font:italic normal 7.4px/7.4px 'Liberation Serif',serif;color:#2a2a2a;white-space:nowrap;transform-origin:0 0;transform:scaleX(1.1934);">W<span style="font-size:5.4px;position:relative;top:1.8px">d 1</span><span style="font-style:normal">=</span></div><div class="a" style="left:591.6px;top:394.7px;width:106px;height:1.5px;background:#1a1a1a"></div><div class="a" id="fit46" style="left:592.3px;top:386.40px;font:italic normal 7.4px/7.4px 'Liberation Serif',serif;color:#2a2a2a;white-space:nowrap;transform-origin:0 0;transform:scaleX(1.1581);"><span style="font-style:normal">0.0145</span>z<span style="font-size:5.4px;position:relative;top:-4.0px;font-style:normal">2</span><span style="font-style:normal">+0.04529 </span>z<span style="font-style:normal">+0.008696</span></div><div class="a" id="fit47" style="left:594.4px;top:398.30px;font:italic normal 7.4px/7.4px 'Liberation Serif',serif;color:#2a2a2a;white-space:nowrap;transform-origin:0 0;transform:scaleX(1.1501);">z<span style="font-size:5.4px;position:relative;top:-4.0px;font-style:normal">3</span><span style="font-style:normal">−2.181 </span>z<span style="font-size:5.4px;position:relative;top:-4.0px;font-style:normal">2</span><span style="font-style:normal">+1.608 </span>z<span style="font-style:normal"> −0.3582</span></div><div class="a" style="left:570.3px;top:445.3px;width:176.20000000000005px;height:21.30000000000001px;border:1px solid #d0d0d0"></div><div class="a" id="fit48" style="left:570.7px;top:451.80px;font:italic normal 7.4px/7.4px 'Liberation Serif',serif;color:#2a2a2a;white-space:nowrap;transform-origin:0 0;transform:scaleX(1.2227);">W<span style="font-size:5.4px;position:relative;top:1.8px">d 2</span><span style="font-style:normal">=</span></div><div class="a" style="left:591.6px;top:456.2px;width:155px;height:1.6px;background:#1a1a1a"></div><div class="a" id="fit49" style="left:592.6px;top:448.10px;font:italic normal 7.4px/7.4px 'Liberation Serif',serif;color:#2a2a2a;white-space:nowrap;transform-origin:0 0;transform:scaleX(1.1437);"><span style="font-style:normal">0.008812</span>z<span style="font-size:5.4px;position:relative;top:-4.0px;font-style:normal">3</span><span style="font-style:normal">+0.02644 </span>z<span style="font-size:5.4px;position:relative;top:-4.0px;font-style:normal">2</span><span style="font-style:normal">+0.02644 </span>z<span style="font-style:normal">+0.008812</span></div><div class="a" id="fit50" style="left:619px;top:458.80px;font:italic normal 7.4px/7.4px 'Liberation Serif',serif;color:#2a2a2a;white-space:nowrap;transform-origin:0 0;transform:scaleX(1.1416);">z<span style="font-size:5.4px;position:relative;top:-4.0px;font-style:normal">3</span><span style="font-style:normal">− 2.158</span>z<span style="font-size:5.4px;position:relative;top:-4.0px;font-style:normal">2</span><span style="font-style:normal">+1.562 </span>z<span style="font-style:normal"> − 0.3338</span></div><div class="a" style="left:961px;top:92px;width:8px;height:440px;background:#cecece"></div><div class="a" style="left:963px;top:95px;width:3.5px;height:73.5px;background:#8c8c8c;border-radius:1.5px"></div><div class="a" style="left:969px;top:92px;width:3.5px;height:440px;background:#fbfbfb"></div><div class="a" style="left:972.5px;top:92px;width:1px;height:440px;background:#d8d8d8"></div><div class="a" style="left:973.5px;top:92px;width:25.5px;height:440px;background:#f5f5f5"></div><div class="a" style="left:999px;top:25px;width:1px;height:547px;background:#8e8e8e"></div><div class="a" style="left:969px;top:91.3px;width:30px;height:1px;background:#dadada"></div><div class="a" style="left:968.7px;top:288px;width:4.2px;height:47.5px;background:#a2a2a2"></div><svg class="a" style="left:969px;top:309px;" width="4" height="6" viewBox="0 0 4 6"><path d="M0.5 0.5L3.5 3L0.5 5.5Z" fill="#fff"/></svg><svg class="a" style="left:979px;top:98px;" width="15" height="15" viewBox="0 0 15 15"><path d="M7.5 0.8L9 2.3L11 1.8L11.5 3.8L13.4 4.6L12.8 6.5L14.2 8L12.8 9.5L13.4 11.4L11.5 12.2L11 14.2L9 13.7L7.5 15.2L6 13.7L4 14.2L3.5 12.2L1.6 11.4L2.2 9.5L0.8 8L2.2 6.5L1.6 4.6L3.5 3.8L4 1.8L6 2.3Z" fill="#e2e2e2" stroke="#a5a5a5" stroke-width="0.9"/><circle cx="7.5" cy="8" r="2.6" fill="#fff" stroke="#a5a5a5" stroke-width="0.9"/></svg><div class="a" style="left:978px;top:117.5px;width:17px;height:1px;background:#e8e8e8"></div><div class="a" style="left:980px;top:124px;width:12.5px;height:13.5px;background:#e8e8e8;border:1px solid #c4c4c4;border-radius:1.5px"></div><svg class="a" style="left:981.5px;top:127.5px;" width="10" height="6" viewBox="0 0 10 6"><rect x="0.3" y="0.3" width="9" height="5" rx="2.5" fill="#3b8de0"/><circle cx="6.8" cy="2.8" r="1.9" fill="#fff"/></svg><div class="a" style="left:980px;top:146px;width:12px;height:14.5px;background:#ebebeb;border:1px solid #c7c7c7"></div><div class="a" style="left:978.5px;top:170.80px;font:normal bold 15px/15px 'Liberation Sans',sans-serif;color:#3f3f3f;white-space:nowrap;">A</div><svg class="a" style="left:986px;top:171px;" width="9" height="13" viewBox="0 0 9 13"><path d="M3.5 7L8.5 0.8" stroke="#b07030" stroke-width="1.4"/><path d="M1 12.3L3.8 7.5" stroke="#e040b0" stroke-width="2"/></svg><svg class="a" style="left:978.5px;top:192px;" width="16" height="15" viewBox="0 0 16 15"><rect x="0.5" y="1.5" width="13" height="11" fill="#e4e4e4" stroke="#aaa" stroke-width="0.7" transform="rotate(-4 7 7)"/><rect x="2" y="2.5" width="13" height="11" fill="#ddd" stroke="#a8a8a8" stroke-width="0.7"/><rect x="3" y="3.5" width="11" height="5" fill="#3d9ee6"/><rect x="3" y="8.5" width="11" height="4" fill="#f2a43a"/><circle cx="6" cy="10.5" r="0.9" fill="#d93a2a"/></svg><div class="a" style="left:976.6px;top:212.4px;width:19.5px;height:20.5px;background:#f7f7f7;border:1px solid #d0d0d0;border-radius:2px"></div><svg class="a" style="left:979px;top:215px;" width="15" height="15" viewBox="0 0 15 15"><circle cx="7.5" cy="7.5" r="6.8" fill="#c9c9c9" stroke="#8f8f8f" stroke-width="0.7"/><circle cx="7.5" cy="7.5" r="5.3" fill="#3a4a78"/><path d="M7.5 2.5L8.6 6.4L12.5 7.5L8.6 8.6L7.5 12.5L6.4 8.6L2.5 7.5L6.4 6.4Z" fill="#e8e8e8"/><path d="M10.8 4.2L8.2 6.8L6.8 8.2L4.2 10.8" stroke="#d83a3a" stroke-width="1.2"/></svg><div class="a" style="left:1px;top:532px;width:998px;height:26px;background:#f5f5f5"></div><div class="a" style="left:3px;top:537.0px;width:2px;height:1.2px;background:#b8b8b8"></div><div class="a" style="left:3px;top:539.5px;width:2px;height:1.2px;background:#b8b8b8"></div><div class="a" style="left:3px;top:542.0px;width:2px;height:1.2px;background:#b8b8b8"></div><div class="a" style="left:3px;top:544.5px;width:2px;height:1.2px;background:#b8b8b8"></div><div class="a" style="left:3px;top:547.0px;width:2px;height:1.2px;background:#b8b8b8"></div><div class="a" style="left:3px;top:549.5px;width:2px;height:1.2px;background:#b8b8b8"></div><svg class="a" style="left:12px;top:537px;" width="15" height="15" viewBox="0 0 15 15"><circle cx="7.5" cy="7.5" r="7" fill="#d62a2a" stroke="#b31d1d" stroke-width="0.6"/><circle cx="7.5" cy="6.8" r="6" fill="#e0393a"/><path d="M5 5L10 10M10 5L5 10" stroke="#fff" stroke-width="1.6"/></svg><div class="a" style="left:30px;top:533px;width:163px;height:23px;background:#fff;border:1px solid #d2d2d2;border-radius:2px"></div><div class="a" style="left:171px;top:534.5px;width:1px;height:20px;background:#dedede"></div><div class="a" id="fit51" style="left:37.2px;top:540.63px;font:normal normal 9.3px/9.3px 'Liberation Sans',sans-serif;color:#8a8a8a;white-space:nowrap;transform-origin:0 0;transform:scaleX(1.0931);">Найти</div><svg class="a" style="left:178.5px;top:542.5px;" width="8" height="5" viewBox="0 0 8 5"><path d="M0.5 0.5H7.5L4 4.3Z" fill="#2a2a2a"/></svg><svg class="a" style="left:199.5px;top:540px;" width="11" height="10" viewBox="0 0 11 10"><path d="M5.5 0.5L10.5 5.5H7.3V9.5H3.7V5.5H0.5Z" fill="#c5c5c5"/></svg><svg class="a" style="left:221px;top:540px;" width="11" height="10" viewBox="0 0 11 10"><path d="M5.5 9.5L10.5 4.5H7.3V0.5H3.7V4.5H0.5Z" fill="#c5c5c5"/></svg><div class="a" id="fit52" style="left:238.3px;top:540.57px;font:normal normal 8.3px/8.3px 'Liberation Sans',sans-serif;color:#9a9a9a;white-space:nowrap;transform-origin:0 0;transform:scaleX(0.9523);">Найти все</div><div class="a" style="left:283px;top:539.5px;width:11px;height:11px;background:#fff;border:1px solid #b9b9b9;border-radius:2px"></div><div class="a" id="fit53" style="left:297.5px;top:540.63px;font:normal normal 9.3px/9.3px 'Liberation Sans',sans-serif;color:#3c3c3c;white-space:nowrap;transform-origin:0 0;transform:scaleX(1.0753);">Учитывать регистр</div><div class="a" style="left:389px;top:535px;width:1px;height:20px;background:#dedede"></div><svg class="a" style="left:396px;top:537px;" width="16" height="16" viewBox="0 0 16 16"><circle cx="4.6" cy="4.8" r="3.9" fill="#fafafa" stroke="#333" stroke-width="1.2"/><path d="M6.5 13.5L12.5 7" stroke="#2d2d2d" stroke-width="2.4"/><path d="M11.5 8L13.6 5.8" stroke="#e28fc8" stroke-width="2.6"/><path d="M6.8 13.2L5.5 15L7.6 14.1Z" fill="#e4d07c"/><path d="M7 7L12 12" stroke="#2d2d2d" stroke-width="1.2"/></svg><div class="a" style="left:416px;top:535px;width:1px;height:20px;background:#dedede"></div><div class="a" style="left:419.5px;top:533px;width:97px;height:23px;background:#fff;border:1px solid #d2d2d2;border-radius:2.5px"></div><div class="a" style="left:427px;top:539.5px;width:8px;height:11px;background:#f4f4f4;border:1px solid #c4c4c4"></div><div class="a" id="fit54" style="left:439.5px;top:540.63px;font:normal normal 9.3px/9.3px 'Liberation Sans',sans-serif;color:#3c3c3c;white-space:nowrap;transform-origin:0 0;transform:scaleX(1.0679);">Страница</div><svg class="a" style="left:502px;top:542.5px;" width="8" height="5" viewBox="0 0 8 5"><path d="M0.5 0.5H7.5L4 4.3Z" fill="#2a2a2a"/></svg><svg class="a" style="left:522px;top:539px;" width="12" height="12" viewBox="0 0 12 12"><path d="M6 0.5L11.2 5.8L9.6 7.4L7.2 5V11.5H4.8V5L2.4 7.4L0.8 5.8Z" fill="#4a4a4a"/></svg><svg class="a" style="left:544px;top:539px;" width="12" height="12" viewBox="0 0 12 12"><path d="M6 11.5L11.2 6.2L9.6 4.6L7.2 7V0.5H4.8V7L2.4 4.6L0.8 6.2Z" fill="#4a4a4a"/></svg><div class="a" style="left:564px;top:535px;width:1px;height:20px;background:#dedede"></div><div class="a" style="left:1px;top:558px;width:998px;height:14px;background:#f5f5f5"></div><div class="a" style="left:1px;top:557px;width:998px;height:1.3px;background:#dddddd"></div><div class="a" style="left:0px;top:571px;width:1000px;height:1px;background:#8c8c8c"></div><div class="a" style="left:154.8px;top:560px;width:1px;height:10px;background:#dddddd"></div><div class="a" style="left:376px;top:560px;width:1px;height:10px;background:#dddddd"></div><div class="a" style="left:624px;top:560px;width:1px;height:10px;background:#dddddd"></div><div class="a" style="left:686px;top:560px;width:1px;height:10px;background:#dddddd"></div><div class="a" style="left:707.5px;top:560px;width:1px;height:10px;background:#dddddd"></div><div class="a" style="left:827.5px;top:560px;width:1px;height:10px;background:#dddddd"></div><div class="a" style="left:876px;top:560px;width:1px;height:10px;background:#dddddd"></div><div class="a" style="left:970px;top:560px;width:1px;height:10px;background:#dddddd"></div><div class="a" id="fit55" style="left:7.2px;top:560.87px;font:normal normal 8.3px/8.3px 'Liberation Sans',sans-serif;color:#3c3c3c;white-space:nowrap;transform-origin:0 0;transform:scaleX(0.9359);">Страница 2 из 7</div><div class="a" id="fit56" style="left:160.3px;top:560.87px;font:normal normal 8.3px/8.3px 'Liberation Sans',sans-serif;color:#3c3c3c;white-space:nowrap;transform-origin:0 0;transform:scaleX(0.9792);">231 слово, 1 905 символов</div><div class="a" id="fit57" style="left:379.6px;top:560.87px;font:normal normal 8.3px/8.3px 'Liberation Sans',sans-serif;color:#3c3c3c;white-space:nowrap;transform-origin:0 0;transform:scaleX(0.9550);">Базовый</div><div class="a" id="fit58" style="left:547.1px;top:560.87px;font:normal normal 8.3px/8.3px 'Liberation Sans',sans-serif;color:#3c3c3c;white-space:nowrap;transform-origin:0 0;transform:scaleX(1.0001);">Русский</div><svg class="a" style="left:672px;top:561px;" width="12" height="9" viewBox="0 0 12 9"><path d="M1 0.5H4M2.5 0.5V8.5M1 8.5H4" stroke="#555" stroke-width="0.8"/><path d="M6 8H7M8 8H9M10 8H11" stroke="#555" stroke-width="0.8"/></svg><svg class="a" style="left:693.5px;top:560.5px;" width="10" height="10" viewBox="0 0 10 10"><rect x="0.5" y="0.5" width="8.5" height="8.5" fill="#eee" stroke="#888" stroke-width="0.8"/><path d="M2.5 4.5H7M4.75 2.3V6.7" stroke="#666" stroke-width="1"/></svg><svg class="a" style="left:834px;top:560.5px;" width="38" height="10" viewBox="0 0 38 10"><path d="M0.5 0.5H4.5L6 2V8.5H0.5Z" fill="#fff" stroke="#888" stroke-width="0.8"/><path d="M9.5 0.5H13.5V8.5H9.5ZM13.5 0.5H17.5V8.5H13.5Z" fill="#fff" stroke="#e8772e" stroke-width="0.9"/><path d="M22 0.5H26V8.5H22Q20.5 4.5 22 0.5ZM26 0.5H30Q31.5 4.5 30 8.5H26Z" fill="#fff" stroke="#888" stroke-width="0.8"/></svg><div class="a" style="left:882.5px;top:565px;width:5px;height:1px;background:#777"></div><div class="a" style="left:894.5px;top:565px;width:61px;height:1px;background:#999"></div><div class="a" style="left:906px;top:563px;width:1px;height:5px;background:#888"></div><div class="a" style="left:923.5px;top:563px;width:1px;height:5px;background:#888"></div><svg class="a" style="left:911.5px;top:561px;" width="9" height="9" viewBox="0 0 9 9"><circle cx="4.5" cy="4.5" r="3.6" fill="#fff" stroke="#777" stroke-width="0.9"/></svg><svg class="a" style="left:959px;top:561px;" width="9" height="9" viewBox="0 0 9 9"><path d="M4.5 0.5V8.5M0.5 4.5H8.5" stroke="#777" stroke-width="0.9"/></svg><div class="a" id="fit59" style="left:974.8px;top:560.87px;font:normal normal 8.3px/8.3px 'Liberation Sans',sans-serif;color:#3c3c3c;white-space:nowrap;transform-origin:0 0;transform:scaleX(0.9566);">80 %</div>
</body></html>
